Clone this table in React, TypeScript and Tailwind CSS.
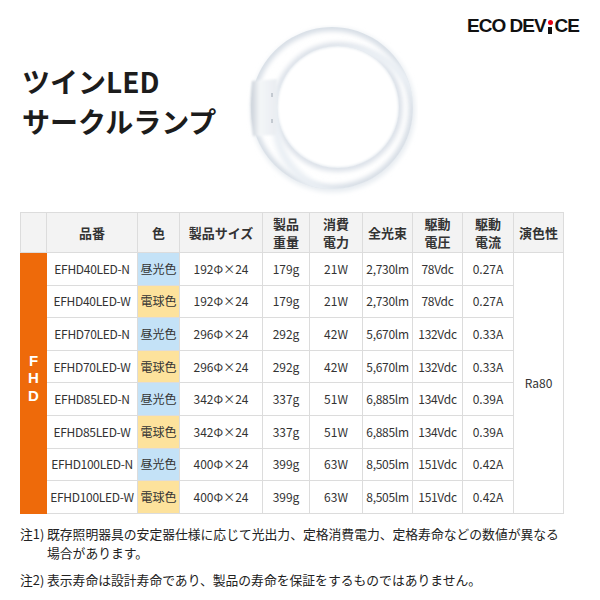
import React from 'react';

const rows = [
  { code: 'EFHD40LED-N', color: '昼光色', size: '192Φ×24', weight: '179g', watt: '21W', lm: '2,730lm', v: '78Vdc', a: '0.27A' },
  { code: 'EFHD40LED-W', color: '電球色', size: '192Φ×24', weight: '179g', watt: '21W', lm: '2,730lm', v: '78Vdc', a: '0.27A' },
  { code: 'EFHD70LED-N', color: '昼光色', size: '296Φ×24', weight: '292g', watt: '42W', lm: '5,670lm', v: '132Vdc', a: '0.33A' },
  { code: 'EFHD70LED-W', color: '電球色', size: '296Φ×24', weight: '292g', watt: '42W', lm: '5,670lm', v: '132Vdc', a: '0.33A' },
  { code: 'EFHD85LED-N', color: '昼光色', size: '342Φ×24', weight: '337g', watt: '51W', lm: '6,885lm', v: '134Vdc', a: '0.39A' },
  { code: 'EFHD85LED-W', color: '電球色', size: '342Φ×24', weight: '337g', watt: '51W', lm: '6,885lm', v: '134Vdc', a: '0.39A' },
  { code: 'EFHD100LED-N', color: '昼光色', size: '400Φ×24', weight: '399g', watt: '63W', lm: '8,505lm', v: '151Vdc', a: '0.42A' },
  { code: 'EFHD100LED-W', color: '電球色', size: '400Φ×24', weight: '399g', watt: '63W', lm: '8,505lm', v: '151Vdc', a: '0.42A' },
];

const font = { fontFamily: '"Noto Sans CJK JP", "Noto Sans", sans-serif' };

// ring lamp drawing
function Ring() {
  const tube = 'M86 2a81 81 0 1 0 0.01 0Z M92 21a61 61 0 1 1 -0.01 0Z';
  return (
    <svg width="172" height="172" viewBox="0 0 172 172" className="shrink-0">
      <defs>
        <filter id="blur2" x="-20%" y="-20%" width="140%" height="140%">
          <feGaussianBlur stdDeviation="2.5" />
        </filter>
        <filter id="blur1" x="-20%" y="-20%" width="140%" height="140%">
          <feGaussianBlur stdDeviation="0.8" />
        </filter>
        <clipPath id="tubeClip">
          <path fillRule="evenodd" clipRule="evenodd" d={tube} />
        </clipPath>
        <linearGradient id="cap" x1="0" x2="1" y1="0" y2="0">
          <stop offset="0" stopColor="#c9d0d8" />
          <stop offset="0.35" stopColor="#f4f6f8" />
          <stop offset="1" stopColor="#e9edf1" />
        </linearGradient>
      </defs>
      <circle cx="87" cy="85" r="82" fill="#e6ebf0" filter="url(#blur2)" />
      <circle cx="92" cy="82" r="60" fill="#ffffff" filter="url(#blur1)" />
      <g clipPath="url(#tubeClip)">
        <path fillRule="evenodd" d={tube} fill="#ffffff" />
        <circle cx="86" cy="83" r="81" fill="none" stroke="#d6dde5" strokeWidth="8" filter="url(#blur2)" />
        <circle cx="92" cy="82" r="61" fill="none" stroke="#d9dfe7" strokeWidth="7" filter="url(#blur2)" />
        <circle cx="102" cy="97" r="72" fill="none" stroke="#eaeff4" strokeWidth="8" filter="url(#blur2)" />
      </g>
      <g filter="url(#blur1)">
        <path d="M6 56 L31 54 L30 110 L7 111 Q3 83 6 56Z" fill="url(#cap)" />
      </g>
      <line x1="26" y1="68" x2="26" y2="72" stroke="#9aa4ae" strokeWidth="1" />
      <line x1="26" y1="94" x2="26" y2="98" stroke="#9aa4ae" strokeWidth="1" />
    </svg>
  );
}

function Logo() {
  return (
    <div
      className="flex items-end text-[19px] font-black leading-none tracking-[-1px] text-[#111]"
      style={{ fontFamily: '"Liberation Sans", Arial, sans-serif' }}
    >
      <span>ECO DEV</span>
      <span className="mx-[2px] flex flex-col items-center pb-[1px]">
        <span className="h-[5px] w-[5px] rounded-full bg-[#e60012]" />
        <span className="mt-[2px] h-[7px] w-[4px] bg-[#111]" />
      </span>
      <span>CE</span>
    </div>
  );
}

export default function App() {
  const th = 'border border-[#dcdcdc] bg-[#f3f3f3] text-[13px] font-bold leading-[18px] text-[#333] text-center';
  const td = 'border border-[#dcdcdc] text-[12px] text-[#333] text-center';

  return (
    <div className="h-[600px] w-[600px] overflow-hidden bg-white" style={font}>
      <div className="flex h-[212px] items-start">
        <div className="w-[226px] shrink-0 pl-[22px] pt-[61px] text-[28px] font-bold leading-[40px] text-[#1c1c1c]">
          <div>ツインLED</div>
          <div>サークルランプ</div>
        </div>
        <div className="pl-[20px] pt-[25px]">
          <Ring />
        </div>
        <div className="flex flex-1 items-start justify-end pr-[21px] pt-[16px]">
          <Logo />
        </div>
      </div>

      <div className="pl-[20px]">
        <table className="w-[543px] table-fixed border-collapse">
          <colgroup>
            <col className="w-[26px]" />
            <col className="w-[91px]" />
            <col className="w-[42px]" />
            <col className="w-[83px]" />
            <col className="w-[47px]" />
            <col className="w-[53px]" />
            <col className="w-[50px]" />
            <col className="w-[50px]" />
            <col className="w-[51px]" />
            <col className="w-[50px]" />
          </colgroup>
          <thead>
            <tr className="h-[40px]">
              <th className={th}></th>
              <th className={th}>品番</th>
              <th className={th}>色</th>
              <th className={th}>製品サイズ</th>
              <th className={th}>製品<br />重量</th>
              <th className={th}>消費<br />電力</th>
              <th className={th}>全光束</th>
              <th className={th}>駆動<br />電圧</th>
              <th className={th}>駆動<br />電流</th>
              <th className={th}>演色性</th>
            </tr>
          </thead>
          <tbody>
            {rows.map((r, i) => (
              <tr key={r.code} className="h-[32.6px]">
                {i === 0 && (
                  <td
                    rowSpan={8}
                    className="border border-[#ee6a0a] bg-[#ee6a0a] pb-[10px] text-center text-[15px] font-bold leading-[17.5px] text-white"
                    style={{ fontFamily: '"Liberation Sans", Arial, sans-serif' }}
                  >
                    F<br />H<br />D
                  </td>
                )}
                <td className={`${td} tracking-[-0.3px]`}>{r.code}</td>
                <td
                  className={`${td} text-[11px] ${r.color === '昼光色' ? 'bg-[#c4e2f7]' : 'bg-[#fde29c]'}`}
                >
                  {r.color}
                </td>
                <td className={td}>{r.size}</td>
                <td className={td}>{r.weight}</td>
                <td className={td}>{r.watt}</td>
                <td className={`${td} tracking-[-0.3px]`}>{r.lm}</td>
                <td className={`${td} tracking-[-0.3px]`}>{r.v}</td>
                <td className={td}>{r.a}</td>
                {i === 0 && (
                  <td rowSpan={8} className={td}>
                    Ra80
                  </td>
                )}
              </tr>
            ))}
          </tbody>
        </table>
      </div>

      <div className="pl-[20px] pr-[10px] pt-[10px] text-[12.8px] leading-[19px] text-[#222]">
        <div className="flex">
          <span className="w-[27px] shrink-0">注1)</span>
          <span>
            既存照明器具の安定器仕様に応じて光出力、定格消費電力、定格寿命などの数値が異なる
            <br />
            場合があります。
          </span>
        </div>
        <div className="mt-[8px] flex">
          <span className="w-[27px] shrink-0">注2)</span>
          <span>表示寿命は設計寿命であり、製品の寿命を保証をするものではありません。</span>
        </div>
      </div>
    </div>
  );
}
